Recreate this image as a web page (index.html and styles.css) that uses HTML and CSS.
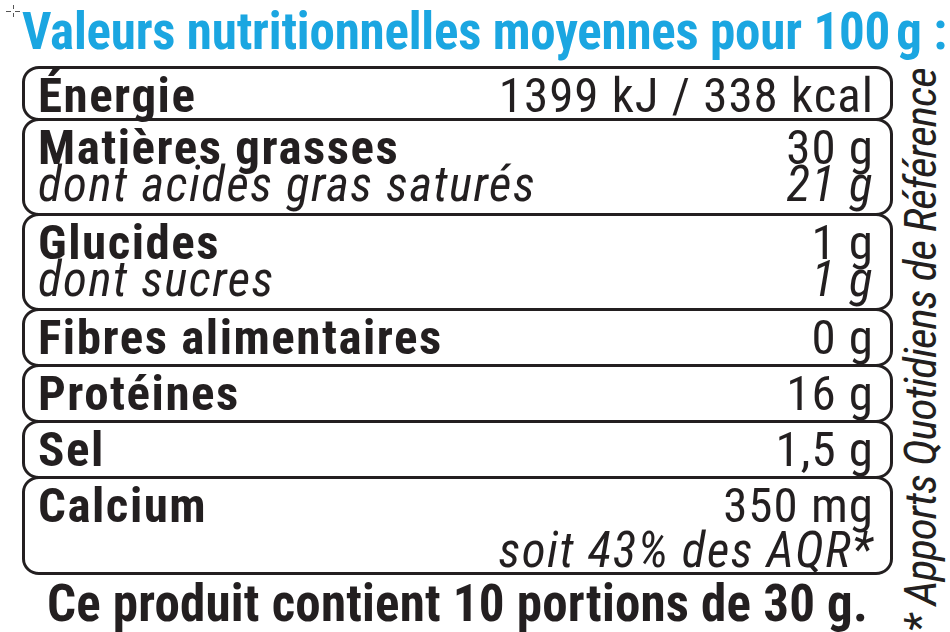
FILE: index.html
```html
<!DOCTYPE html>
<html lang="fr">
<head>
<meta charset="utf-8">
<title>Valeurs nutritionnelles</title>
<link rel="stylesheet" href="styles.css">
</head>
<body>
<div class="page">
  <svg class="reg-mark" width="14" height="12" viewBox="0 0 14 12" aria-hidden="true">
    <path d="M0 6.5H5M9 6.5H14M7.5 0V4M7.5 8V12" stroke="#555" stroke-width="1" fill="none"/>
  </svg>
  <h1 class="title">Valeurs nutritionnelles moyennes pour 100&#8201;g :</h1>
  <div class="content">
    <div class="main">
      <div class="table">
        <div class="row row--short">
          <div class="line"><span class="label">Énergie</span><span class="value">1399 kJ / 338 kcal</span></div>
        </div>
        <div class="row row--tall">
          <div class="line"><span class="label">Matières grasses</span><span class="value">30 g</span></div>
          <div class="line line--sub"><span>dont acides gras saturés</span><span>21 g</span></div>
        </div>
        <div class="row row--tall">
          <div class="line"><span class="label">Glucides</span><span class="value">1 g</span></div>
          <div class="line line--sub"><span>dont sucres</span><span>1 g</span></div>
        </div>
        <div class="row">
          <div class="line"><span class="label">Fibres alimentaires</span><span class="value">0 g</span></div>
        </div>
        <div class="row">
          <div class="line"><span class="label">Protéines</span><span class="value">16 g</span></div>
        </div>
        <div class="row">
          <div class="line"><span class="label">Sel</span><span class="value">1,5 g</span></div>
        </div>
        <div class="row row--calcium">
          <div class="line"><span class="label">Calcium</span><span class="value">350 mg</span></div>
          <div class="line line--sub line--note"><span></span><span>soit 43% des AQR*</span></div>
        </div>
      </div>
      <p class="footer">Ce produit contient 10 portions de 30 g.</p>
    </div>
    <div class="side">* Apports Quotidiens de Référence</div>
  </div>
</div>
</body>
</html>
```
FILE: styles.css
```css
html, body {
  margin: 0;
  padding: 0;
  background: #ffffff;
}

body {
  color: #231f20;
  font-family: "Roboto Condensed", "Roboto", sans-serif;
}

.page {
  position: relative;
  width: 950px;
  height: 632px;
  padding-left: 22px;
  box-sizing: border-box;
  overflow: hidden;
}

.reg-mark {
  position: absolute;
  left: 6px;
  top: 5px;
}

.title {
  margin: 0 0 7.5px;
  padding-top: 6px;
  font-size: 51px;
  line-height: 52px;
  font-weight: 700;
  color: #1ba6e1;
  white-space: nowrap;
  letter-spacing: -0.2px;
}

.content {
  display: flex;
  gap: 4px;
  height: 566.5px;
}

.main {
  width: 871px;
  flex: none;
}

.table {
  display: flex;
  flex-direction: column;
}

.row {
  border: 3px solid #231f20;
  border-radius: 17px / 16px;
  padding: 8px 16px 8px 13px;
}

.row + .row {
  margin-top: -3px;
}

.row--short {
  padding-bottom: 4px;
}

.row--tall {
  padding-bottom: 10px;
}

.row--calcium {
  padding-bottom: 3px;
}

.line {
  display: flex;
  justify-content: space-between;
  font-size: 49px;
  line-height: 37px;
  letter-spacing: 1.5px;
  white-space: nowrap;
}

.label {
  font-weight: 700;
}

.value {
  font-weight: 400;
  letter-spacing: 1px;
}

.line--sub {
  font-style: italic;
  font-weight: 400;
}

.line--note {
  margin-top: 8px;
}

.footer {
  margin: 3.5px 0 0;
  font-size: 51px;
  line-height: 52px;
  font-weight: 700;
  text-align: center;
  letter-spacing: 0.2px;
  white-space: nowrap;
}

.side {
  width: 48px;
  flex: none;
  overflow: visible;
  writing-mode: vertical-rl;
  transform: rotate(180deg);
  font-size: 45px;
  line-height: 48px;
  font-style: italic;
  letter-spacing: -1px;
  white-space: nowrap;
}
```
